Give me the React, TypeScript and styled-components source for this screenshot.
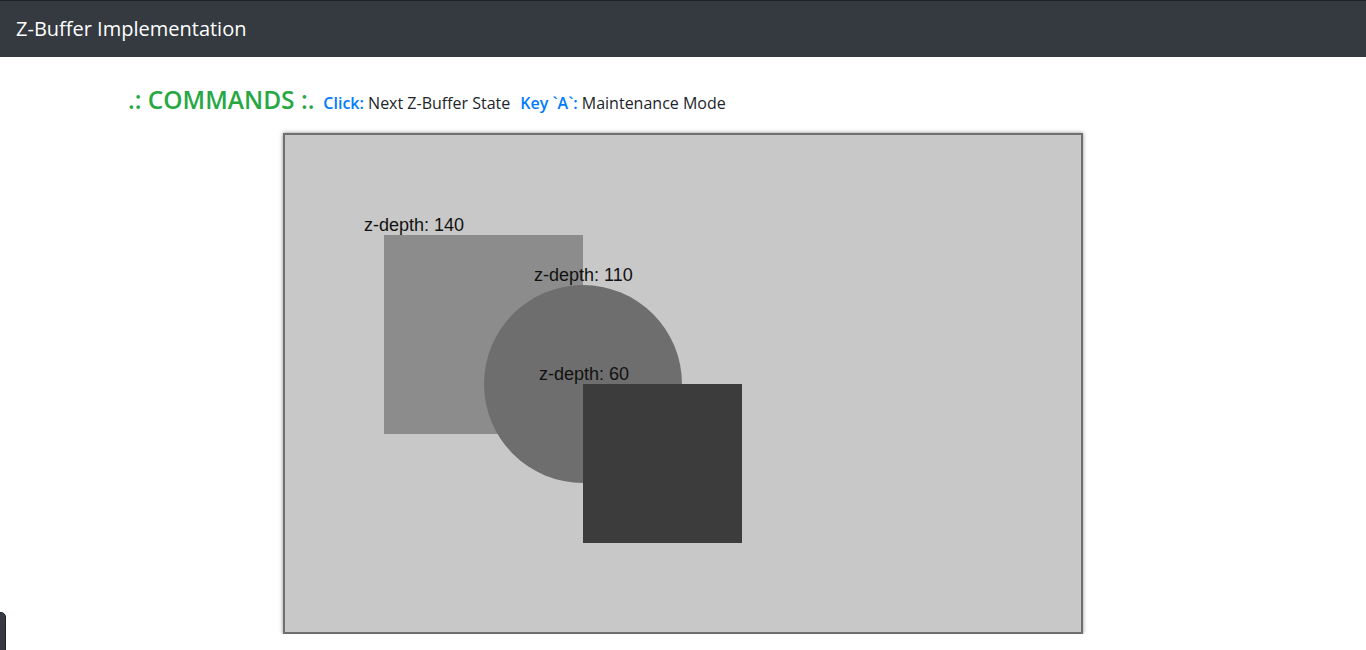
import styled, { createGlobalStyle } from "styled-components";

const GlobalStyle = createGlobalStyle`
  html, body {
    margin: 0;
    padding: 0;
    background: #ffffff;
    font-family: "Open Sans", "Liberation Sans", sans-serif;
    color: #212529;
  }
`;

const NavBar = styled.nav`
  height: 57px;
  border-top: 1px solid #1f2328;
  background: #343a40;
  display: flex;
  align-items: center;
  padding: 0 16px 2px;
  box-sizing: border-box;
`;

const Brand = styled.span`
  font-size: 20px;
  color: #ffffff;
`;

const Container = styled.div`
  max-width: 1110px;
  margin: 0 auto;
  padding: 0 15px;
`;

const CommandRow = styled.div`
  display: flex;
  align-items: baseline;
  gap: 9px;
  padding-top: 28px;
  height: 76px;
  box-sizing: border-box;
`;

const Heading = styled.h4`
  margin: 0;
  font-size: 24.5px;
  font-weight: 600;
  color: #28a745;
  line-height: 1.2;
`;

const Command = styled.span`
  font-size: 16px;
  color: #212529;
  & + & {
    margin-left: 1px;
  }
`;

const Key = styled.span`
  color: #007bff;
  font-weight: 600;
`;

const CanvasFrame = styled.div`
  width: 796px;
  height: 497px;
  margin: 0 auto;
  border: 2px solid #6f6f6f;
  box-shadow: 0 0 4px rgba(0, 0, 0, 0.45);
  background: #c8c8c8;
`;

const Label = styled.text`
  font-family: "Liberation Sans", Arial, sans-serif;
  font-size: 18px;
  fill: #111111;
`;

const SideTab = styled.div`
  position: fixed;
  left: -6px;
  top: 612px;
  width: 10px;
  height: 60px;
  border-radius: 5px;
  background: #343a40;
  border: 1px solid #1f2328;
`;

type Shape =
  | { kind: "rect"; x: number; y: number; size: number; depth: number }
  | { kind: "circle"; x: number; y: number; r: number; depth: number };

const shapes: Shape[] = [
  { kind: "rect", x: 99, y: 100, size: 199, depth: 140 },
  { kind: "circle", x: 298, y: 249, r: 99, depth: 110 },
  { kind: "rect", x: 298, y: 249, size: 159, depth: 60 },
];

const grey = (v: number) => `rgb(${v}, ${v}, ${v})`;

function ZBufferCanvas() {
  return (
    <CanvasFrame>
      <svg width={796} height={497}>
        {shapes.map((s, i) =>
          s.kind === "rect" ? (
            <rect key={i} x={s.x} y={s.y} width={s.size} height={s.size} fill={grey(s.depth)} />
          ) : (
            <circle key={i} cx={s.x} cy={s.y} r={s.r} fill={grey(s.depth)} />
          )
        )}
        <Label x={79} y={96}>z-depth: 140</Label>
        <Label x={249} y={146}>z-depth: 110</Label>
        <Label x={254} y={245}>z-depth: 60</Label>
      </svg>
    </CanvasFrame>
  );
}

export default function App() {
  return (
    <>
      <GlobalStyle />
      <NavBar>
        <Brand>Z-Buffer Implementation</Brand>
      </NavBar>
      <Container>
        <CommandRow>
          <Heading>.: COMMANDS :.</Heading>
          <Command>
            <Key>Click:</Key> Next Z-Buffer State
          </Command>
          <Command>
            <Key>Key `A`:</Key> Maintenance Mode
          </Command>
        </CommandRow>
      </Container>
      <ZBufferCanvas />
      <SideTab />
    </>
  );
}
